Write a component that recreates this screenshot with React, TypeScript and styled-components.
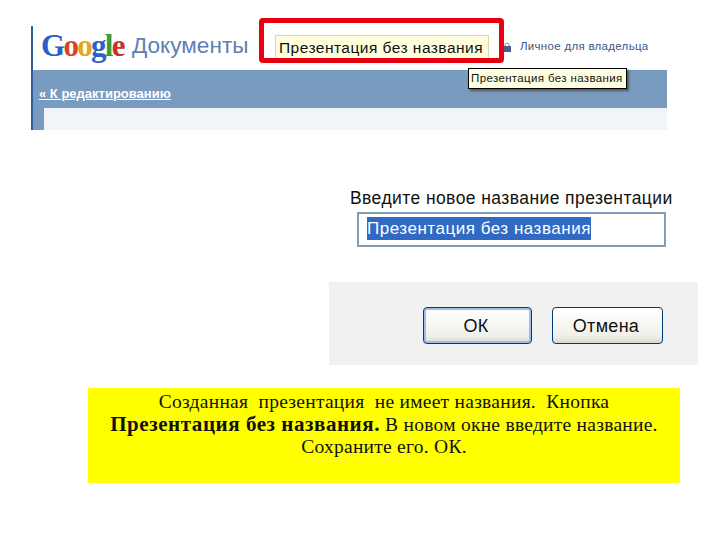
import styled, { createGlobalStyle } from "styled-components";

const GlobalStyle = createGlobalStyle`
	html, body {
		margin: 0;
		background: #fff;
	}
`;

const Slide = styled.div`
	width: 728px;
	height: 546px;
	box-sizing: border-box;
	padding-top: 26px;
	overflow: hidden;
	position: relative;
	display: flex;
	flex-direction: column;
`;

const DocsShot = styled.div`
	position: relative;
	margin-left: 31px;
	width: 636px;
	height: 104px;
	box-sizing: border-box;
	border-left: 2px solid #2f5f9f;
	display: flex;
	flex-direction: column;
`;

const TopRow = styled.div`
	height: 44px;
	display: flex;
	align-items: center;
	padding-left: 8px;
	box-sizing: border-box;
`;

const Logo = styled.div`
	width: 84px;
	font: bold 31px/1 "Liberation Serif", serif;
	letter-spacing: -1.7px;
	margin-top: -6px;
	white-space: nowrap;
`;

const LogoLetter = styled.span<{ color: string }>`
	color: ${(props) => props.color};
`;

const DocsWord = styled.div`
	margin-left: 7px;
	margin-top: -4px;
	width: 143px;
	font: 22.6px/1 "Liberation Sans", sans-serif;
	color: #5f80b4;
	white-space: nowrap;
`;

const TitleBox = styled.div`
	width: 214px;
	height: 27px;
	box-sizing: border-box;
	margin-top: 1px;
	background: #ffffdd;
	border: 1px solid #d8d8b8;
	font: 15.5px/23px "Liberation Sans", sans-serif;
	letter-spacing: 0.47px;
	color: #111;
	padding-left: 3px;
	white-space: nowrap;
`;

const PrivacyRow = styled.div`
	margin-left: 14px;
	margin-top: -3px;
	display: flex;
	align-items: center;
	gap: 9px;
	font: 11.5px/1 "Liberation Sans", sans-serif;
	letter-spacing: 0.3px;
	color: #3f5583;
	white-space: nowrap;
`;

const BlueBar = styled.div`
	height: 38px;
	background: #789bbf;
	padding-left: 6px;
	display: flex;
	align-items: center;
	box-sizing: border-box;
	padding-top: 8px;
`;

const BackLink = styled.a`
	font: bold 13px/1 "Liberation Sans", sans-serif;
	color: #fff;
	text-decoration: underline;
	white-space: nowrap;
`;

const BlueStrip = styled.div`
	flex: 1;
	background: #789bbf;
	padding-left: 11px;
	display: flex;
`;

const PalePanel = styled.div`
	flex: 1;
	background: #f1f4f9;
`;

const RedFrame = styled.div`
	position: absolute;
	left: 226px;
	top: -8px;
	width: 245px;
	height: 45px;
	box-sizing: border-box;
	border: 5px solid #e8000f;
	border-radius: 4px;
`;

const Tooltip = styled.div`
	position: absolute;
	left: 435px;
	top: 42px;
	width: 159px;
	height: 21px;
	box-sizing: border-box;
	border: 1px solid #000;
	background: #ffffe1;
	box-shadow: 2px 2px 2px #555;
	font: 11.5px/19px "Liberation Sans", sans-serif;
	letter-spacing: 0.36px;
	color: #111;
	padding-left: 2px;
	white-space: nowrap;
`;

const Dialog = styled.div`
	margin-left: 329px;
	margin-top: 58px;
	width: 369px;
	display: flex;
	flex-direction: column;
`;

const DialogHeading = styled.div`
	margin-left: 21px;
	height: 20px;
	font: 17.5px/20px "Liberation Sans", sans-serif;
	letter-spacing: 0.42px;
	color: #111;
	white-space: nowrap;
`;

const NameField = styled.div`
	margin: 4px 0 0 28px;
	width: 309px;
	height: 35px;
	box-sizing: border-box;
	border: 2px solid #7f9db9;
	padding: 3px 0 0 8px;
`;

const Selected = styled.span`
	display: inline-block;
	height: 23px;
	width: 224px;
	background: #316ac5;
	color: #fff;
	font: 17px/23px "Liberation Sans", sans-serif;
	letter-spacing: 0.52px;
	white-space: nowrap;
`;

const DialogFooter = styled.div`
	margin-top: 35px;
	height: 83px;
	background: #f1f1f1;
	box-sizing: border-box;
	padding: 25px 35px 0 94px;
	display: flex;
	justify-content: space-between;
	align-items: flex-start;
`;

const DialogButton = styled.button<{ primary?: boolean; wide: number }>`
	width: ${(props) => props.wide}px;
	height: 37px;
	padding: 0 3px 0 0;
	border: 1px solid #003c74;
	border-radius: 4px;
	background: linear-gradient(#ffffff, #f0f0ea 80%, #dcd8ce);
	box-shadow: inset 0 0 0 ${(props) => (props.primary ? "2px #9dbdec" : "0 #fff")};
	font: 18px/1 "Liberation Sans", sans-serif;
	letter-spacing: 0.3px;
	color: #111;
`;

const Caption = styled.div`
	margin: 23px 0 0 88px;
	width: 592px;
	height: 95px;
	box-sizing: border-box;
	padding-top: 3px;
	background: #ffff00;
	text-align: center;
	font: 19.5px/22px "Liberation Serif", serif;
	letter-spacing: 0.26px;
	color: #111;
`;

const CaptionStrong = styled.b`
	font-size: 21px;
	letter-spacing: 0.55px;
`;

export default function App() {
	return (
		<Slide>
			<GlobalStyle />
			<DocsShot>
				<TopRow>
					<Logo>
						<LogoLetter color="#2a62c4">G</LogoLetter>
						<LogoLetter color="#d8442a">o</LogoLetter>
						<LogoLetter color="#e0a820">o</LogoLetter>
						<LogoLetter color="#2a62c4">g</LogoLetter>
						<LogoLetter color="#3a9a3a">l</LogoLetter>
						<LogoLetter color="#c8341f">e</LogoLetter>
					</Logo>
					<DocsWord>Документы</DocsWord>
					<TitleBox>Презентация без названия</TitleBox>
					<PrivacyRow>
						<svg width="8" height="10" viewBox="0 0 8 10">
							<path d="M2 4V3a2 2 0 0 1 4 0v1" fill="none" stroke="#8a8a9a" strokeWidth="1" />
							<rect x="0" y="4" width="8" height="6" fill="#4a5a8a" />
						</svg>
						Личное для владельца
					</PrivacyRow>
				</TopRow>
				<BlueBar>
					<BackLink>« К редактированию</BackLink>
				</BlueBar>
				<BlueStrip>
					<PalePanel />
				</BlueStrip>
				<RedFrame />
				<Tooltip>Презентация без названия</Tooltip>
			</DocsShot>

			<Dialog>
				<DialogHeading>Введите новое название презентации</DialogHeading>
				<NameField>
					<Selected>Презентация без названия</Selected>
				</NameField>
				<DialogFooter>
					<DialogButton primary wide={109}>
						ОК
					</DialogButton>
					<DialogButton wide={111}>Отмена</DialogButton>
				</DialogFooter>
			</Dialog>

			<Caption>
				Созданная&nbsp; презентация&nbsp; не имеет названия.&nbsp; Кнопка
				<br />
				<CaptionStrong>Презентация без названия.</CaptionStrong> В новом окне введите название.
				<br />
				Сохраните его. ОК.
			</Caption>
		</Slide>
	);
}
